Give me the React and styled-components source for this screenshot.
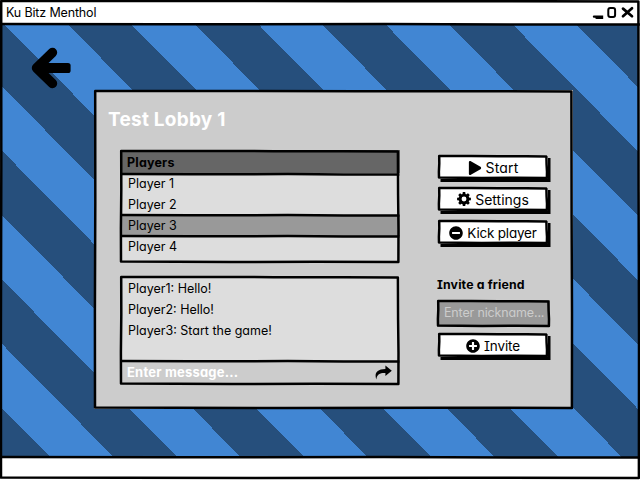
import React from "react";
import styled, { createGlobalStyle } from "styled-components";
import { FaPlay, FaMinusCircle, FaPlusCircle } from "react-icons/fa";

const GlobalStyle = createGlobalStyle`
  * { box-sizing: border-box; }
  body {
    margin: 0;
    background: #fff;
    color: #000;
    font: 12.5px/21px Inter, "Open Sans", sans-serif;
    overflow: hidden;
  }
`;

/* Hand-drawn outline laid over a box: slightly uneven strokes. */
const Outline = styled.svg`
  position: absolute;
  inset: 0;
  overflow: visible;
  pointer-events: none;
  path { fill: none; stroke: #000; stroke-width: 2.5; stroke-linejoin: round; stroke-linecap: square; }
`;

function Sketch({ w, h, lines = [] }) {
  const wave = (y) =>
    `M1.3 ${y + 0.9}L${w * 0.25} ${y + 1.2}L${w * 0.6} ${y + 1.1}L${w * 0.8} ${y + 1.5}L${w - 1.4} ${y + 1.5}`;
  return (
    <Outline width={w} height={h} aria-hidden="true">
      <path
        d={`M1.2 1.1L${w * 0.3} .9L${w * 0.55} 1.2L${w * 0.8} 1.2L${w - 1.6} 1.4L${w - 1.4} ${h * 0.4}L${w - 1} ${h * 0.7}L${w - 1.1} ${h - 1.1}L${w * 0.7} ${h - 1.3}L${w * 0.4} ${h - 1}L1 ${h - 1.4}L.9 ${h * 0.7}L1.3 ${h * 0.35}Z`}
      />
      {lines.map((y) => <path key={y} d={wave(y)} />)}
    </Outline>
  );
}

const Window = styled.div`
  position: relative;
  display: grid;
  grid-template-rows: 24px 433px 22px;
  width: 640px;
  height: 480px;
  padding: 0 1px 1px 1px;
  overflow: hidden;
`;

const TitleBar = styled.header`
  display: flex;
  justify-content: space-between;
  align-items: center;
  padding: 1px 5px 0 5px;
  background: #fff;
`;

const Label = styled.span`
  font-size: ${(p) => p.$size || 12.5}px;
  font-weight: ${(p) => p.$weight || 400};
  letter-spacing: ${(p) => p.$track || 0}px;
  font-feature-settings: "cv11", "cv08";
  white-space: nowrap;
`;

const Desktop = styled.main`
  display: flex;
  background: repeating-linear-gradient(
    45.38deg,
    #264f7c 0 34.9px,
    #4186d3 34.9px 80.12px,
    #264f7c 80.12px 90.44px
  );
`;

const BackButton = styled.button`
  width: 93px;
  padding: 23px 0 0 30px;
  border: 0;
  background: none;
  display: flex;
  align-items: flex-start;
  color: #000;
`;

const Lobby = styled.section`
  position: relative;
  width: 479px;
  height: 319px;
  margin-top: 66px;
  padding: 17px 23px 0 14px;
  background: #ccc;
`;

const Title = styled.h1`
  margin: 0;
  height: 43px;
  line-height: 26px;
  color: #fff;
  font-size: 0;
`;

const Columns = styled.div`
  display: flex;
  justify-content: space-between;
  padding-left: 12px;
`;

const Main = styled.div`
  display: flex;
  flex-direction: column;
  gap: 13px;
`;

const Box = styled.div`
  position: relative;
  width: 280px;
  height: ${(p) => p.$height}px;
  padding: ${(p) => p.$top || 0}px 0 0;
  background: #ddd;
`;

const Row = styled.div`
  height: 21px;
  padding-left: 8px;
  background: ${(p) => p.$fill || "transparent"};
  display: flex;
  align-items: center;
`;

const HeaderRow = styled(Row)`
  height: 23px;
  padding: 2px 0 0 7px;
  background: #666;
`;

const Messages = styled.div`
  height: 83px;
`;

const Composer = styled.div`
  display: flex;
  justify-content: space-between;
  align-items: center;
  height: 24px;
  padding: 0 8px 1px 7px;
  background: #ccc;
  color: #fff;
`;

const Side = styled.div`
  width: 113px;
  padding-top: 5px;
`;

const Button = styled.button`
  position: relative;
  display: flex;
  align-items: center;
  justify-content: center;
  gap: ${(p) => p.$gap || 4}px;
  width: 110px;
  height: 24px;
  margin: 0 0 ${(p) => p.$after || 9}px 1px;
  padding: ${(p) => p.$drop || 0}px 0 0;
  border: 0;
  background: #fff;
  box-shadow: 2.5px 3px 0 #000;
  color: #000;
  font: inherit;
`;

const Caption = styled.div`
  height: 27px;
  padding-top: 1px;
  line-height: 21px;
`;

const Field = styled.div`
  position: relative;
  display: flex;
  align-items: center;
  width: 113px;
  height: 27px;
  margin-bottom: 6px;
  padding: 0 0 2px 7px;
  background: #999;
  color: #ccc;
`;

const TaskBar = styled.footer`
  background: #fff;
`;

function BackArrow() {
  return (
    <svg width="42" height="44" viewBox="0 0 42 44" aria-hidden="true">
      <path d="M21.5 5.5L5.5 21L21.5 36.5" fill="none" stroke="#000" strokeWidth="9.4" strokeLinecap="round" strokeLinejoin="round" />
      <rect x="8" y="16" width="31.6" height="10" rx="2.6" />
    </svg>
  );
}

function GearIcon() {
  const teeth = [0, 45, 90, 135, 180, 225, 270, 315];
  return (
    <svg width="14" height="14" viewBox="-7 -7 14 14" aria-hidden="true">
      <circle r="3.9" fill="none" stroke="#000" strokeWidth="2.9" />
      {teeth.map((a) => (
        <path key={a} d="M-1.6 -4.6L-1.2 -6.9H1.2L1.6 -4.6Z" transform={`rotate(${a})`} />
      ))}
    </svg>
  );
}

function ShareIcon() {
  return (
    <svg width="17" height="15" viewBox="0 0 17 15" aria-hidden="true">
      <path d="M1.3 14.5C-.6 9 1 4.2 10.4 4.1V.4L16.8 5.8L10.4 11V7.9C5.3 7.7 2 8.8 1.3 14.5Z" fill="#000" />
    </svg>
  );
}

function WindowControls() {
  return (
    <svg width="43" height="14" viewBox="0 0 43 14" aria-hidden="true">
      <path d="M3 10.6H11V11.8H5.5" fill="none" stroke="#000" strokeWidth="2.4" strokeLinecap="round" />
      <rect x="17.3" y="2" width="6.8" height="9" rx="2" fill="none" stroke="#000" strokeWidth="2" />
      <path d="M32 2.6L41 10.2M41 2.2L32 10.2" stroke="#000" strokeWidth="2.7" strokeLinecap="round" />
    </svg>
  );
}

const players = ["Player 1", "Player 2", "Player 3", "Player 4"];
const messages = ["Player1: Hello!", "Player2: Hello!", "Player3: Start the game!"];

export default function App() {
  return (
    <>
      <GlobalStyle />
      <Window>
        <TitleBar>
          <Label $track={-0.15}>Ku Bitz Menthol</Label>
          <WindowControls />
        </TitleBar>
        <Desktop>
          <BackButton aria-label="Back"><BackArrow /></BackButton>
          <Lobby>
            <Sketch w={479} h={319} />
            <Title><Label $size={19} $weight={700} $track={0.25}>Test Lobby 1</Label></Title>
            <Columns>
              <Main>
                <Box $height={113}>
                  <HeaderRow><Label $weight={700} $track={0.2}>Players</Label></HeaderRow>
                  {players.map((name) => (
                    <Row key={name} $fill={name === "Player 3" ? "#999" : undefined}>
                      <Label>{name}</Label>
                    </Row>
                  ))}
                  <Sketch w={279.5} h={113} lines={[23, 64, 85]} />
                </Box>
                <Box $height={109} $top={2}>
                  <Messages>
                    {messages.map((text) => (
                      <Row key={text}><Label>{text}</Label></Row>
                    ))}
                  </Messages>
                  <Composer>
                    <Label $weight={700} $size={13} $track={0.2}>Enter message...</Label>
                    <ShareIcon />
                  </Composer>
                  <Sketch w={279.5} h={109} lines={[84]} />
                </Box>
              </Main>
              <Side>
                <Button $after={8} $drop={1}><Sketch w={110} h={24} /><FaPlay size={14} /><Label $size={14} $track={0.15}>Start</Label></Button>
                <Button><Sketch w={110} h={24} /><GearIcon /><Label $size={14}>Settings</Label></Button>
                <Button $after={29} $drop={2}><Sketch w={110} h={24} /><FaMinusCircle size={14} /><Label $size={13.5} $track={-0.2}>Kick player</Label></Button>
                <Caption><Label $weight={700} $size={12.3} $track={0.15}>Invite a friend</Label></Caption>
                <Field><Sketch w={113} h={27} /><Label $track={-0.15}>Enter nickname...</Label></Field>
                <Button $drop={2}><Sketch w={110} h={24} /><FaPlusCircle size={14} /><Label $size={13.5} $track={-0.1}>Invite</Label></Button>
              </Side>
            </Columns>
          </Lobby>
        </Desktop>
        <TaskBar />
        <Sketch w={640} h={479} lines={[23, 456]} />
      </Window>
    </>
  );
}
